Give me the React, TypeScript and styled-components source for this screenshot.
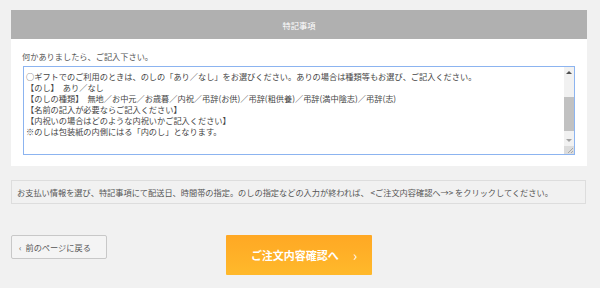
import React, { useEffect, useRef } from "react";
import styled, { createGlobalStyle } from "styled-components";

const Global = createGlobalStyle`
  html, body { margin: 0; padding: 0; background: #f1f1f1; }
  body { font-family: "Noto Sans CJK JP", "Noto Sans", sans-serif; color: #555; }
  * { box-sizing: border-box; }
`;

const Page = styled.div`
  width: 600px;
  height: 288px;
  padding: 10px 13px 0 11px;
  display: flex;
  flex-direction: column;
`;

const Header = styled.div`
  height: 29px;
  background: #b0b0b0;
  color: #fff;
  font-size: 8.2px;
  display: flex;
  align-items: center;
  justify-content: center;
`;

const Panel = styled.div`
  background: #fff;
  height: 127px;
  padding: 12px 12px 0 11px;
  display: flex;
  flex-direction: column;
`;

const Label = styled.div`
  font-size: 8.2px;
  line-height: 11px;
  color: #555;
  height: 15px;
`;

const Field = styled.div`
  margin-left: 1px;
  height: 89px;
  border: 1px solid #8cb4f0;
  display: flex;
`;

const Area = styled.textarea`
  flex: 1;
  border: none;
  outline: none;
  resize: none;
  overflow: hidden;
  padding: 4px 2px;
  font-family: "Noto Sans CJK JP", sans-serif;
  font-size: 8.2px;
  line-height: 11px;
  color: #444;
  background: #fff;
  caret-color: #444;
`;

const Bar = styled.div`
  width: 10px;
  background: #f1f1f1;
  display: flex;
  flex-direction: column;
  align-items: center;
`;

const Arrow = styled.div<{ $up?: boolean; $c: string }>`
  width: 0;
  height: 0;
  margin: ${(p) => (p.$up ? "4px 0 3px" : "3px 0 4px")};
  border-left: 3px solid transparent;
  border-right: 3px solid transparent;
  ${(p) => (p.$up ? `border-bottom: 3px solid ${p.$c};` : `border-top: 3px solid ${p.$c};`)}
`;

const Track = styled.div`
  flex: 1;
  width: 100%;
  display: flex;
  flex-direction: column;
  padding-top: 20px;
  padding-bottom: 5px;
`;

const Thumb = styled.div`
  height: 34px;
  width: 100%;
  background: #c1c1c1;
`;

const Corner = styled.div`
  width: 10px;
  height: 12px;
  background: #dcdcdc;
  display: flex;
  align-items: flex-end;
  justify-content: flex-end;
`;

const Info = styled.div`
  margin-top: 14px;
  margin-right: 1px;
  height: 24px;
  border: 1px solid #dddddd;
  padding: 0 5px;
  display: flex;
  align-items: center;
  font-size: 8.2px;
  color: #555;
`;

const Actions = styled.div`
  margin-top: 31px;
  display: grid;
  grid-template-columns: 1fr auto 1fr;
  align-items: start;
`;

const BackButton = styled.button`
  justify-self: start;
  width: 96px;
  height: 24px;
  border: 1px solid #c8c8c8;
  border-radius: 2px;
  background: #f4f4f4;
  color: #555;
  font-family: "Noto Sans CJK JP", sans-serif;
  font-size: 8.2px;
  display: flex;
  align-items: center;
  gap: 4px;
  padding: 0 0 0 7px;
`;

const NextButton = styled.button`
  width: 146px;
  height: 40px;
  border: none;
  border-radius: 1px;
  background: linear-gradient(#ffa824, #ffb92b);
  color: #fff;
  font-family: "Noto Sans CJK JP", sans-serif;
  font-weight: bold;
  font-size: 11px;
  display: flex;
  align-items: center;
  justify-content: center;
  gap: 14px;
  padding: 0 0 0 10px;
`;

const Chevron = styled.span`
  font-weight: normal;
  font-size: 14px;
  line-height: 1;
`;

const text = [
  "○ギフトでのご利用のときは、のしの「あり／なし」をお選びください。ありの場合は種類等もお選び、ご記入ください。",
  "【のし】　あり／なし",
  "【のしの種類】　無地／お中元／お歳暮／内祝／弔辞(お供)／弔辞(粗供養)／弔辞(満中陰志)／弔辞(志)",
  "【名前の記入が必要ならご記入ください】",
  "【内祝いの場合はどのような内祝いかご記入ください】",
  "※のしは包装紙の内側にはる「内のし」となります。",
  "",
].join("\n");

export default function App() {
  const ref = useRef<HTMLTextAreaElement>(null);
  useEffect(() => {
    const el = ref.current;
    if (el) {
      el.focus();
      el.setSelectionRange(text.length, text.length);
      el.scrollTop = 0;
    }
  }, []);
  return (
    <>
      <Global />
      <Page>
        <Header>特記事項</Header>
        <Panel>
          <Label>何かありましたら、ご記入下さい。</Label>
          <Field>
            <Area ref={ref} defaultValue={text} spellCheck={false} />
            <Bar>
              <Arrow $up $c="#505050" />
              <Track>
                <Thumb />
              </Track>
              <Arrow $c="#a3a3a3" />
              <Corner>
                <svg width="8" height="8" viewBox="0 0 8 8">
                  <path d="M7 2 L2 7 M7 5 L5 7" stroke="#9a9a9a" strokeWidth="0.8" />
                </svg>
              </Corner>
            </Bar>
          </Field>
        </Panel>
        <Info>
          お支払い情報を選び、特記事項にて配送日、時間帯の指定。のしの指定などの入力が終われば、 &lt;ご注文内容確認へ→&gt; をクリックしてください。
        </Info>
        <Actions>
          <BackButton>
            <span>‹</span>
            <span>前のページに戻る</span>
          </BackButton>
          <NextButton>
            <span>ご注文内容確認へ</span>
            <Chevron>›</Chevron>
          </NextButton>
          <div />
        </Actions>
      </Page>
    </>
  );
}
